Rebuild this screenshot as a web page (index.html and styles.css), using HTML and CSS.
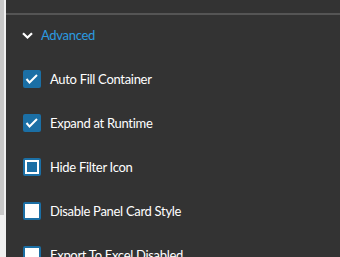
FILE: index.html
```html
<!DOCTYPE html>
<html lang="en">
<head>
    <meta charset="UTF-8">
    <title>Advanced</title>
    <link rel="stylesheet" href="styles.css">
</head>
<body>
    <div class="scroll">
        <div class="thumb"></div>
    </div>
    <div class="panel">
        <div class="top"></div>
        <div class="section">
            <svg class="chevron" width="11" height="7" viewBox="0 0 11 7">
                <path d="M1 1.2 L5.5 5.5 L10 1.2" fill="none" stroke="#fff" stroke-width="2.2"/>
            </svg>
            <span class="section-title">Advanced</span>
        </div>
        <div class="options">
            <div class="option">
                <span class="box checked">
                    <svg width="18" height="18" viewBox="0 0 18 18">
                        <path d="M3.5 9 L6.5 12.5 L14 5" fill="none" stroke="#fff" stroke-width="2"/>
                    </svg>
                </span>
                <span class="label">Auto Fill Container</span>
            </div>
            <div class="option">
                <span class="box checked">
                    <svg width="18" height="18" viewBox="0 0 18 18">
                        <path d="M3.5 9 L6.5 12.5 L14 5" fill="none" stroke="#fff" stroke-width="2"/>
                    </svg>
                </span>
                <span class="label">Expand at Runtime</span>
            </div>
            <div class="option">
                <span class="box focus"><span class="dot"></span></span>
                <span class="label">Hide Filter Icon</span>
            </div>
            <div class="option">
                <span class="box"></span>
                <span class="label">Disable Panel Card Style</span>
            </div>
            <div class="option">
                <span class="box"></span>
                <span class="label">Export To Excel Disabled</span>
            </div>
        </div>
    </div>
</body>
</html>
```

FILE: styles.css
```css
body {
    margin: 0;
    height: 257px;
    overflow: hidden;
    display: flex;
    background-color: #333333;
    font-family: 'Lato', sans-serif;
    font-size: 13px;
    letter-spacing: -0.3px;
}
.scroll {
    width: 6px;
    flex-shrink: 0;
    background-color: #f0f0f0;
}
.thumb {
    width: 4px;
    height: 215px;
    background-color: #c8c8c8;
}
.panel {
    flex: 1;
}
.top {
    height: 13px;
    border-bottom: 2px solid #555555;
}
.section {
    display: flex;
    align-items: center;
    height: 40px;
    padding-left: 16px;
}
.chevron {
    margin-right: 8px;
    margin-top: 1px;
}
.section-title {
    color: #2b9be0;
}
.options {
    padding-top: 2px;
}
.option {
    display: flex;
    align-items: center;
    height: 44px;
    padding-left: 17px;
}
.box {
    width: 18px;
    height: 18px;
    box-sizing: border-box;
    border: 2px solid #1b6fa5;
    border-radius: 2px;
    background-color: #fff;
    display: flex;
    align-items: center;
    justify-content: center;
    margin-right: 9px;
    flex-shrink: 0;
}
.box.checked {
    background-color: #1b6fa5;
    border: none;
}
.dot {
    width: 10px;
    height: 10px;
    background-color: #1b6fa5;
}
.label {
    color: #ffffff;
    white-space: nowrap;
}
```
